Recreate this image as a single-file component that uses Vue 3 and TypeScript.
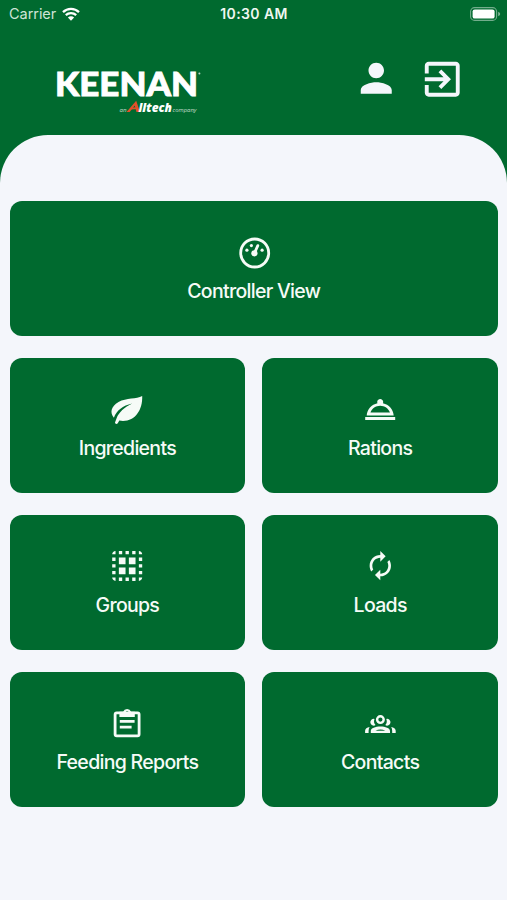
<script setup lang="ts">
type IconName = 'gauge' | 'leaf' | 'service' | 'group' | 'renew' | 'clipboard' | 'people'

interface Tile {
  label: string
  icon: IconName
  wide?: boolean
}

const tiles: Tile[] = [
  { label: 'Controller View', icon: 'gauge', wide: true },
  { label: 'Ingredients', icon: 'leaf' },
  { label: 'Rations', icon: 'service' },
  { label: 'Groups', icon: 'group' },
  { label: 'Loads', icon: 'renew' },
  { label: 'Feeding Reports', icon: 'clipboard' },
  { label: 'Contacts', icon: 'people' },
]
</script>

<template>
  <div class="screen">
    <header class="header">
      <div class="status">
        <div class="carrier">
          <span>Carrier</span>
          <svg class="wifi" viewBox="0 0 18 14">
            <path d="M1 5.1a11.6 11.6 0 0 1 16 0M3.8 8.1a7.6 7.6 0 0 1 10.4 0" fill="none" stroke="currentColor" stroke-width="2.3" />
            <path d="M9 13.7 5.9 10.5a4.4 4.4 0 0 1 6.2 0z" fill="currentColor" />
          </svg>
        </div>
        <span class="time">10:30 AM</span>
        <svg class="battery" viewBox="0 0 31 14">
          <rect x="0.6" y="0.6" width="26" height="12.8" rx="4" fill="none" stroke="#fff" stroke-opacity="0.45" stroke-width="1.1" />
          <rect x="2.6" y="2.4" width="22" height="9.2" rx="2.2" fill="#fff" />
          <path d="M28.2 4.7q2 .7 2 2.3t-2 2.3z" fill="#fff" fill-opacity="0.5" />
        </svg>
      </div>
      <div class="bar">
        <svg class="logo" viewBox="0 0 150 48">
          <text class="brand" x="1" y="29.3" textLength="143" lengthAdjust="spacingAndGlyphs">KEENAN</text>
          <circle cx="145.4" cy="6.6" r="1" fill="#b9d3c3" />
          <text class="small" x="65.5" y="44.5" textLength="7" lengthAdjust="spacingAndGlyphs">an</text>
          <path d="M72.5 45 82.2 33.8l3.8 11.2h-3.5l-1.8-6.4-5 6.4z" fill="#e2502a" />
          <path d="M78.3 40.6l4.8-.3.8 1.8-7 .4z" fill="#e2502a" />
          <text class="alltech" x="84.500" y="44.5" textLength="33.5" lengthAdjust="spacingAndGlyphs">lltech</text>
          <text class="small" x="118.500" y="44.5" textLength="24" lengthAdjust="spacingAndGlyphs">company</text>
        </svg>
        <div class="actions">
          <svg viewBox="0 0 24 24">
            <path d="M12 12c2.21 0 4-1.79 4-4s-1.79-4-4-4-4 1.79-4 4 1.79 4 4 4zm0 2c-2.67 0-8 1.34-8 4v2h16v-2c0-2.66-5.33-4-8-4z" />
          </svg>
          <svg class="exit" viewBox="0 0 24 24">
            <path d="M10.09 15.59 11.5 17l5-5-5-5-1.41 1.41L12.67 11H3v2h9.67l-2.58 2.59zM19 3H5c-1.11 0-2 .9-2 2v4h2V5h14v14H5v-4H3v4c0 1.1.89 2 2 2h14c1.1 0 2-.9 2-2V5c0-1.1-.9-2-2-2z" />
          </svg>
        </div>
      </div>
    </header>

    <div class="sheet-top"><div class="sheet-curve"></div></div>

    <main class="grid">
      <button v-for="tile in tiles" :key="tile.label" class="tile" :class="{ wide: tile.wide }">
        <svg class="icon" viewBox="0 0 40 40">
          <g v-if="tile.icon === 'gauge'">
            <circle cx="20.7" cy="20" r="14" fill="none" stroke="currentColor" stroke-width="2.8" />
            <circle cx="12.9" cy="17.2" r="1.6" />
            <circle cx="17.4" cy="12.6" r="1.6" />
            <circle cx="28.1" cy="17.2" r="1.6" />
            <circle cx="20.4" cy="20.3" r="3.1" />
            <path d="M20.6 19.8 23.8 12.6" stroke="currentColor" stroke-width="2.8" stroke-linecap="round" />
          </g>
          <g v-else-if="tile.icon === 'leaf'">
            <path d="M35.2 6C29.5 9.400 19.500 7.500 11.500 12C3.7 16.6 2.800 22.600 6.900 27.800C9.7 20.400 15.600 15.800 25.2 13.600C17.300 17.500 12 22 9.500 28.600L8 32.600c.2 1.800 2.200 1.800 2.900.5l1.4-2.500C27 33 35.800 21 35.2 6z" />
          </g>
          <g v-else-if="tile.icon === 'service'" transform="translate(2.2 1.5) scale(1.5)">
            <path d="M2 17h20v2H2v-2zm11.84-9.21c.1-.24.16-.51.16-.79 0-1.1-.9-2-2-2s-2 .9-2 2c0 .28.06.55.16.79C6.25 8.6 3.27 11.93 3 16h18c-.27-4.07-3.25-7.4-7.16-8.21zM12 9.58c2.95 0 5.47 1.83 6.5 4.41h-13c1.03-2.58 3.55-4.41 6.5-4.41z" />
          </g>
          <g v-else-if="tile.icon === 'group'" transform="translate(0.2 -1.1) scale(1.6667)">
            <path d="M3 5h2V3c-1.1 0-2 .9-2 2zm0 8h2v-2H3v2zm4 8h2v-2H7v2zM3 9h2V7H3v2zm10-6h-2v2h2V3zm6 0v2h2c0-1.1-.9-2-2-2zM5 21v-2H3c0 1.1.9 2 2 2zm-2-4h2v-2H3v2zM9 3H7v2h2V3zm2 18h2v-2h-2v2zm8-8h2v-2h-2v2zm0 8c1.1 0 2-.9 2-2h-2v2zm0-12h2V7h-2v2zm0 8h2v-2h-2v2zm-4 4h2v-2h-2v2zm0-16h2V3h-2v2zM7 7h4v4H7zm6 0h4v4h-4zm-6 6h4v4H7zm6 0h4v4h-4z" />
          </g>
          <g v-else-if="tile.icon === 'renew'" transform="translate(4.3 2.7) scale(1.3333)">
            <path d="M12 6v3l4-4-4-4v3c-4.42 0-8 3.58-8 8 0 1.57.46 3.03 1.24 4.26L6.7 14.8c-.45-.83-.7-1.79-.7-2.8 0-3.31 2.69-6 6-6zm6.76 1.74L17.3 9.2c.44.84.7 1.79.7 2.8 0 3.31-2.69 6-6 6v-3l-4 4 4 4v-3c4.42 0 8-3.58 8-8 0-1.57-.46-3.03-1.24-4.26z" />
          </g>
          <g v-else-if="tile.icon === 'clipboard'" transform="translate(0.2 -0.8)">
            <rect x="7.9" y="9.7" width="24" height="23" rx="1.6" fill="none" stroke="currentColor" stroke-width="2.8" />
            <path fill-rule="evenodd" d="M12.2 8.5h3.7a4.3 4.3 0 0 1 8 0h3.7v5.4H12.2zM19.9 7.9a1.4 1.4 0 1 0 0 2.8 1.4 1.4 0 0 0 0-2.8z" />
            <path d="M12.6 16.8h14.8v2.7H12.6zM12.6 22.6h11.8v2.7H12.6z" />
          </g>
          <g v-else transform="translate(0.3 -0.5)">
            <circle cx="20.1" cy="16.100" r="3.3" fill="none" stroke="currentColor" stroke-width="2.4" />
            <path d="M14.2 15.4a3.4 3.4 0 1 0 1 6.2 6 6 0 0 1-1-6.2zM26 15.4a3.4 3.4 0 1 1-1 6.2 6 6 0 0 0 1-6.2z" />
            <path fill-rule="evenodd" d="M10.5 29.600v-2.2c0-2.800 4.600-4.500 9.600-4.500s9.600 1.700 9.600 4.500v2.200zM15.200 27.200h9.800c-3-1.500-6.800-1.500-9.800 0z" />
            <path d="M9.300 23.600c-2.600.6-4.500 1.800-4.500 3.700v2.300h3.500v-2.200c0-1.500.4-2.800 1-3.800zM30.900 23.600c2.600.6 4.500 1.800 4.500 3.700v2.300h-3.500v-2.200c0-1.500-.4-2.800-1-3.800z" />
          </g>
        </svg>
        <span class="label">{{ tile.label }}</span>
      </button>
    </main>
  </div>
</template>

<style>
body {
  margin: 0;
  background: #f4f6fb;
}
</style>

<style scoped>
.screen {
  height: 900px;
  overflow: hidden;
  background: #f4f6fb;
  font-family: Inter, "Liberation Sans", sans-serif;
  color: #fff;
}

.header {
  height: 135px;
  background: #006a2f;
}

.status {
  display: grid;
  grid-template-columns: 1fr auto 1fr;
  align-items: center;
  height: 27px;
  padding: 0 6px 0 9px;
  font-size: 14.5px;
  color: #eff7f1;
}

.carrier {
  display: flex;
  align-items: center;
  gap: 6px;
  color: #cfe4d6;
  letter-spacing: -0.05px;
}

.wifi {
  width: 18px;
  height: 14px;
  color: #fff;
}

.time {
  margin-right: 2px;
  font-size: 14px;
  font-weight: 600;
  letter-spacing: 0.4px;
}

.battery {
  width: 31px;
  height: 14px;
  justify-self: end;
}

.bar {
  display: flex;
  justify-content: space-between;
  padding: 28px 42px 0 54px;
}

.logo {
  width: 150px;
  height: 48px;
  margin-top: 12px;
  overflow: visible;
  fill: #fff;
}

.brand {
  font: 900 33px Lato, sans-serif;
  stroke: #fff;
  stroke-width: 0.9px;
}

.small {
  font: italic 6px "Open Sans", sans-serif;
  fill: #c5dccd;
}

.alltech {
  font: italic 800 12px "Open Sans", sans-serif;
}

.actions {
  display: flex;
  gap: 19px;
}

.actions svg {
  width: 46.5px;
  height: 46.5px;
  fill: #f4f6fb;
}

.actions .exit {
  margin-top: 1px;
}

.sheet-top {
  height: 48px;
  background: #006a2f;
}

.sheet-curve {
  height: 100%;
  border-radius: 48px 48px 0 0;
  background: #f4f6fb;
}

.grid {
  display: grid;
  grid-template-columns: 1fr 1fr;
  grid-auto-rows: 135px;
  gap: 22px 17px;
  padding: 18px 9px 0 9.5px;
}

.tile {
  display: flex;
  flex-direction: column;
  align-items: center;
  min-width: 0;
  margin: 0;
  padding: 32px 0 0;
  border: 0;
  border-radius: 12px;
  background: #006a2f;
  color: #f6fbf7;
  font-family: inherit;
}

.wide {
  grid-column: 1 / -1;
}

.icon {
  width: 40px;
  height: 40px;
  fill: currentColor;
}

.label {
  margin-top: 6px;
  font-size: 19.5px;
  font-weight: 450;
  line-height: 25px;
  letter-spacing: -0.7px;
  white-space: nowrap;
}
</style>
